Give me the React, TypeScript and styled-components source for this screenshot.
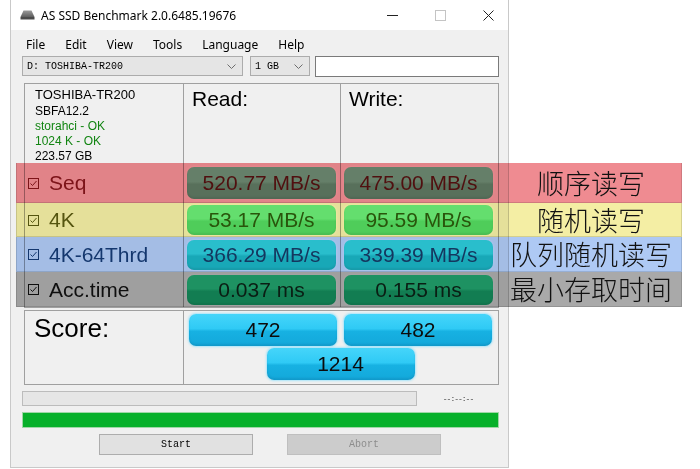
import React from "react";
import styled, { createGlobalStyle } from "styled-components";

const GlobalStyle = createGlobalStyle`
  html, body { margin: 0; padding: 0; background: #ffffff; }
  body { font-family: "Liberation Sans", Arial, sans-serif; color: #000; }
  #root { width: 700px; height: 469px; overflow: hidden; }
  * { box-sizing: border-box; }
`;

type Tone = {
  label: string;
  top: string;
  bottom: string;
  text: string;
};

type Row = {
  name: string;
  read: string;
  write: string;
  height: number;
  tone: Tone;
  band: string;
  note: string;
};

const rows: Row[] = [
  {
    name: "Seq",
    read: "520.77 MB/s",
    write: "475.00 MB/s",
    height: 40,
    tone: { label: "#85242b", top: "#6ce9b8", bottom: "#5ecda0", text: "#551b1a" },
    band: "#ef8b91",
    note: "顺序读写",
  },
  {
    name: "4K",
    read: "53.17 MB/s",
    write: "95.59 MB/s",
    height: 34,
    tone: { label: "#595b17", top: "#68eeab", bottom: "#52dc8c", text: "#2a5b10" },
    band: "#f4eea4",
    note: "随机读写",
  },
  {
    name: "4K-64Thrd",
    read: "366.29 MB/s",
    write: "339.39 MB/s",
    height: 35,
    tone: { label: "#1d4673", top: "#3bf1d6", bottom: "#23d5c0", text: "#1d4663" },
    band: "#aec9f4",
    note: "队列随机读写",
  },
  {
    name: "Acc.time",
    read: "0.037 ms",
    write: "0.155 ms",
    height: 35,
    tone: { label: "#161616", top: "#2cdd93", bottom: "#1bbd7c", text: "#0f2c1d" },
    band: "#a9a9a9",
    note: "最小存取时间",
  },
];

const Page = styled.div`
  position: relative;
  width: 700px;
  height: 469px;
  background: #ffffff;
  padding-left: 10px;
  display: flex;
  align-items: flex-start;
`;

const Window = styled.div`
  width: 499px;
  height: 468px;
  background: #f0f0f0;
  border: 1px solid #c9c9c9;
  border-top: none;
  display: flex;
  flex-direction: column;
`;

const TitleBar = styled.div`
  height: 30px;
  background: #ffffff;
  display: flex;
  align-items: center;
  padding-left: 9px;
  font-family: "Noto Sans", "Open Sans", sans-serif;
  font-size: 12px;
  color: #000;
`;

const TitleText = styled.span`
  margin-left: 6px;
  flex: 1;
`;

const Controls = styled.div`
  display: flex;
  gap: 8px;
  height: 100%;
`;

const ControlButton = styled.div`
  width: 40px;
  display: flex;
  align-items: center;
  justify-content: center;
`;

const MenuBar = styled.div`
  height: 26px;
  display: flex;
  align-items: flex-end;
  padding: 0 0 3px 5px;
  font-family: "Noto Sans", "Open Sans", sans-serif;
  font-size: 12px;
  line-height: 16px;
`;

const MenuItem = styled.span`
  padding: 0 10px;
`;

const Toolbar = styled.div`
  display: flex;
  align-items: flex-start;
  height: 21px;
  margin: 0 9px 0 11px;
`;

const Select = styled.div<{ $width: number; $gap: number }>`
  width: ${(p) => p.$width}px;
  margin-right: ${(p) => p.$gap}px;
  height: 20px;
  background: #e5e5e5;
  border: 1px solid #acacac;
  display: flex;
  align-items: center;
  padding: 0 6px 0 4px;
  font-family: "Liberation Mono", "Courier New", monospace;
  font-size: 10px;
  color: #000;
`;

const SelectText = styled.span`
  flex: 1;
  white-space: pre;
`;

const TextBox = styled.div`
  flex: 1;
  height: 21px;
  background: #ffffff;
  border: 1px solid #7a7a7a;
`;

const Panel = styled.div<{ $rows: string; $top: number }>`
  margin: ${(p) => p.$top}px 9px 0 13px;
  border: 1px solid #a0a0a0;
  display: grid;
  grid-template-columns: 158px 157px 157px;
  grid-template-rows: ${(p) => p.$rows};
`;

const ScorePanel = styled(Panel)`
  grid-template-columns: 158px 314px;
`;

const Cell = styled.div<{ $divider?: boolean }>`
  border-left: ${(p) => (p.$divider ? "1px solid #a0a0a0" : "none")};
  display: flex;
  align-items: center;
  min-width: 0;
`;

const InfoCell = styled(Cell)`
  flex-direction: column;
  align-items: flex-start;
  padding: 2px 0 0 10px;
`;

const InfoLine = styled.div<{ $ok?: boolean; $lead?: boolean }>`
  font-size: ${(p) => (p.$lead ? 13 : 12)}px;
  line-height: ${(p) => (p.$lead ? 18 : 15)}px;
  color: ${(p) => (p.$ok ? "#128512" : "#000")};
  white-space: nowrap;
`;

const HeaderCell = styled(Cell)`
  align-items: flex-start;
  padding: 3px 0 0 8px;
  font-size: 21px;
  line-height: 24px;
`;

const LabelCell = styled(Cell)<{ $color: string }>`
  padding-left: 3px;
  gap: 10px;
  font-size: 21px;
  color: ${(p) => p.$color};
`;

const ResultBox = styled.div<{ $tone: Tone; $h: number }>`
  height: ${(p) => p.$h}px;
  flex: 1;
  margin: 0 4px 0 3px;
  border-radius: 7px;
  background: linear-gradient(
    180deg,
    ${(p) => p.$tone.top} 0%,
    ${(p) => p.$tone.top} 46%,
    ${(p) => p.$tone.bottom} 54%,
    ${(p) => p.$tone.bottom} 100%
  );
  box-shadow: 0 0 2px 1px rgba(255, 255, 255, 0.55),
    inset 0 -2px 2px rgba(0, 0, 0, 0.08);
  display: flex;
  align-items: center;
  justify-content: center;
  font-size: 21px;
  color: ${(p) => p.$tone.text};
`;

const ScoreLabel = styled(Cell)`
  align-items: flex-start;
  padding: 2px 0 0 9px;
  font-size: 26px;
  line-height: 30px;
`;

const ScoreGrid = styled(Cell)`
  flex-wrap: wrap;
  align-content: flex-start;
  justify-content: center;
  gap: 2px 7px;
  padding-top: 3px;
`;

const ScoreBox = styled.div`
  width: 148px;
  height: 32px;
  border-radius: 7px;
  background: linear-gradient(
    180deg,
    #45d5fa 0%,
    #2fcaf5 46%,
    #17b1e2 54%,
    #13a8da 100%
  );
  box-shadow: 0 0 2px 1px rgba(120, 220, 255, 0.6),
    inset 0 -2px 2px rgba(0, 60, 100, 0.12);
  display: flex;
  align-items: center;
  justify-content: center;
  font-size: 21px;
  color: #0c0c0c;
`;

const ProgressRow = styled.div`
  display: flex;
  align-items: center;
  margin: 6px 9px 0 11px;
  height: 15px;
`;

const ProgressTrack = styled.div`
  width: 395px;
  height: 15px;
  background: #e6e6e6;
  border: 1px solid #bcbcbc;
`;

const TimeText = styled.span`
  flex: 1;
  text-align: center;
  font-family: "Liberation Mono", monospace;
  font-size: 8px;
  color: #333;
  letter-spacing: -1px;
`;

const DoneBar = styled.div`
  margin: 6px 9px 0 11px;
  height: 16px;
  border: 1px solid #9fd7a6;
  background: #07b02a;
`;

const ButtonRow = styled.div`
  display: flex;
  gap: 34px;
  margin: 6px 0 0 88px;
`;

const Button = styled.div<{ $disabled?: boolean }>`
  width: 154px;
  height: 21px;
  display: flex;
  align-items: center;
  justify-content: center;
  border: 1px solid ${(p) => (p.$disabled ? "#bfbfbf" : "#adadad")};
  background: ${(p) => (p.$disabled ? "#cccccc" : "#e1e1e1")};
  color: ${(p) => (p.$disabled ? "#8d8d8d" : "#000")};
  font-family: "Liberation Mono", monospace;
  font-size: 10px;
`;

/* Colour bands laid over the result rows, with a caption beside each */
const Bands = styled.div`
  position: absolute;
  top: 163px;
  left: 16px;
  width: 666px;
  display: flex;
  flex-direction: column;
  pointer-events: none;
`;

const Band = styled.div<{ $color: string; $h: number }>`
  height: ${(p) => p.$h}px;
  background: ${(p) => p.$color};
  mix-blend-mode: multiply;
  border: 1px solid rgba(0, 0, 0, 0.13);
  border-top-width: 0;
  display: flex;
  align-items: center;
  justify-content: center;
  padding: 0 6px 0 490px;
  font-family: "Noto Sans CJK SC", "Noto Sans", sans-serif;
  font-weight: 300;
  font-size: 27px;
  line-height: 30px;
  color: #111;
  white-space: nowrap;
`;

const Caption = styled.span`
  display: block;
  line-height: 28px;
  height: 28px;
`;

const DriveIcon = () => (
  <svg width="15" height="10" viewBox="0 0 15 10">
    <defs>
      <linearGradient id="drv" x1="0" y1="0" x2="0" y2="1">
        <stop offset="0" stopColor="#9a9a9a" />
        <stop offset="1" stopColor="#5e5e5e" />
      </linearGradient>
    </defs>
    <polygon points="3.5,0.5 11.5,0.5 14.5,7 0.5,7" fill="url(#drv)" />
    <rect x="0.5" y="7" width="14" height="2.5" fill="#4a4a4a" />
  </svg>
);

const Chevron = () => (
  <svg width="9" height="5" viewBox="0 0 9 5">
    <polyline points="0.5,0.5 4.5,4.5 8.5,0.5" fill="none" stroke="#6d6d6d" strokeWidth="1" />
  </svg>
);

const CheckBox = ({ color }: { color: string }) => (
  <svg width="11" height="11" viewBox="0 0 11 11">
    <rect x="0.5" y="0.5" width="10" height="10" fill="none" stroke={color} strokeWidth="1" />
    <polyline points="2.5,5.5 4.5,7.5 8.5,3" fill="none" stroke={color} strokeWidth="1" />
  </svg>
);

export default function App() {
  const panelRows = `79px ${rows.map((r) => `${r.height}px`).join(" ")}`;
  return (
    <>
      <GlobalStyle />
      <Page>
        <Window>
          <TitleBar>
            <DriveIcon />
            <TitleText>AS SSD Benchmark 2.0.6485.19676</TitleText>
            <Controls>
              <ControlButton>
                <svg width="11" height="11" viewBox="0 0 11 11">
                  <line x1="0" y1="5.5" x2="11" y2="5.5" stroke="#222" strokeWidth="1" />
                </svg>
              </ControlButton>
              <ControlButton>
                <svg width="11" height="11" viewBox="0 0 11 11">
                  <rect x="0.5" y="0.5" width="10" height="10" fill="none" stroke="#c4c4c4" />
                </svg>
              </ControlButton>
              <ControlButton>
                <svg width="11" height="11" viewBox="0 0 11 11">
                  <path d="M0.5 0.5 L10.5 10.5 M10.5 0.5 L0.5 10.5" stroke="#222" strokeWidth="1" />
                </svg>
              </ControlButton>
            </Controls>
          </TitleBar>

          <MenuBar>
            {["File", "Edit", "View", "Tools", "Language", "Help"].map((m) => (
              <MenuItem key={m}>{m}</MenuItem>
            ))}
          </MenuBar>

          <Toolbar>
            <Select $width={221} $gap={7}>
              <SelectText>D: TOSHIBA-TR200</SelectText>
              <Chevron />
            </Select>
            <Select $width={60} $gap={5}>
              <SelectText>1 GB</SelectText>
              <Chevron />
            </Select>
            <TextBox />
          </Toolbar>

          <Panel $rows={panelRows} $top={6}>
            <InfoCell>
              <InfoLine $lead>TOSHIBA-TR200</InfoLine>
              <InfoLine>SBFA12.2</InfoLine>
              <InfoLine $ok>storahci - OK</InfoLine>
              <InfoLine $ok>1024 K - OK</InfoLine>
              <InfoLine>223.57 GB</InfoLine>
            </InfoCell>
            <HeaderCell $divider>Read:</HeaderCell>
            <HeaderCell $divider>Write:</HeaderCell>
            {rows.map((r, i) => (
              <React.Fragment key={r.name}>
                <LabelCell $color={r.tone.label}>
                  <CheckBox color={r.tone.label} />
                  {r.name}
                </LabelCell>
                <Cell $divider>
                  <ResultBox $tone={r.tone} $h={i === 0 ? 32 : 30}>
                    {r.read}
                  </ResultBox>
                </Cell>
                <Cell $divider>
                  <ResultBox $tone={r.tone} $h={i === 0 ? 32 : 30}>
                    {r.write}
                  </ResultBox>
                </Cell>
              </React.Fragment>
            ))}
          </Panel>

          <ScorePanel $rows="73px" $top={2}>
            <ScoreLabel>Score:</ScoreLabel>
            <ScoreGrid $divider>
              <ScoreBox>472</ScoreBox>
              <ScoreBox>482</ScoreBox>
              <ScoreBox>1214</ScoreBox>
            </ScoreGrid>
          </ScorePanel>

          <ProgressRow>
            <ProgressTrack />
            <TimeText>--:--:--</TimeText>
          </ProgressRow>

          <DoneBar />

          <ButtonRow>
            <Button>Start</Button>
            <Button $disabled>Abort</Button>
          </ButtonRow>
        </Window>

        <Bands>
          {rows.map((r) => (
            <Band key={r.name} $color={r.band} $h={r.height}>
              <Caption>{r.note}</Caption>
            </Band>
          ))}
        </Bands>
      </Page>
    </>
  );
}
